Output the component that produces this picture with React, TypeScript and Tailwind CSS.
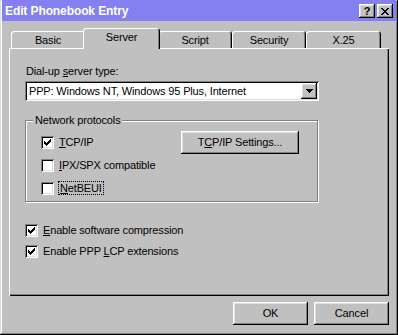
import type { ReactNode } from 'react';

// Win95 style bevels
const raised =
  'shadow-[inset_-1px_-1px_#000,inset_1px_1px_#fff,inset_-2px_-2px_#808080,inset_2px_2px_#dfdfdf]';
const sunken =
  'shadow-[inset_1px_1px_#808080,inset_-1px_-1px_#fff,inset_2px_2px_#000,inset_-2px_-2px_#dfdfdf]';

function CheckMark() {
  // 7x7 pixel tick
  return (
    <svg width="7" height="7" viewBox="0 0 7 7" shapeRendering="crispEdges">
      <path
        d="M6 0h1v3h-1zM5 1h1v3h-1zM4 2h1v3h-1zM0 2h1v3h-1zM1 3h1v3h-1zM2 4h1v3h-1zM3 3h1v3h-1z"
        fill="#000"
      />
    </svg>
  );
}

function Checkbox({ checked, children }: { checked?: boolean; children: ReactNode }) {
  return (
    <div className="flex items-center gap-[5px]">
      <div className={`w-[13px] h-[13px] bg-white flex items-center justify-center ${sunken}`}>
        {checked && <CheckMark />}
      </div>
      <span>{children}</span>
    </div>
  );
}

function Button({ children, w }: { children: ReactNode; w: string }) {
  return (
    <div className={`${w} h-[23px] flex items-center justify-center bg-[#c0c0c0] ${raised}`}>
      {children}
    </div>
  );
}

function Tab({ label, w, active }: { label: string; w: string; active?: boolean }) {
  if (active) {
    return (
      <div
        className={`${w} relative z-10 -mx-[2px] -mb-[1px] h-[21px] pb-[2px] bg-[#c0c0c0] rounded-t-[3px] flex items-center justify-center shadow-[inset_1px_1px_#fff,inset_-1px_0_#000,inset_-2px_0_#808080]`}
      >
        {label}
      </div>
    );
  }
  return (
    <div
      className={`${w} h-[17px] pt-[2px] rounded-t-[3px] flex items-center justify-center shadow-[inset_1px_1px_#fff,inset_-1px_0_#000,inset_-2px_0_#808080]`}
    >
      {label}
    </div>
  );
}

export default function App() {
  return (
    <div className="w-[398px] h-[335px] bg-[#c0c0c0] flex flex-col text-black text-[11px] leading-[13px] tracking-[-0.15px] font-['Liberation_Sans',Arial,sans-serif] shadow-[inset_-1px_-1px_#000,inset_1px_1px_#dfdfdf,inset_-2px_-2px_#808080,inset_2px_2px_#fff]">
      {/* Başlık çubuğu */}
      <div className="mx-[2px] h-[21px] pt-[1px] pl-[3px] pr-[3px] bg-[#8480f2] flex items-center">
        <span className="text-white font-bold text-[12px] tracking-[-0.1px]">Edit Phonebook Entry</span>
        <div className="ml-auto flex gap-[2px]">
          <div className={`w-[16px] h-[14px] bg-[#c0c0c0] flex items-center justify-center font-bold text-[11px] leading-none ${raised}`}>
            ?
          </div>
          <div className={`w-[16px] h-[14px] bg-[#c0c0c0] flex items-center justify-center ${raised}`}>
            <svg width="8" height="7" viewBox="0 0 8 7" shapeRendering="crispEdges">
              <path
                d="M0 0h2v1h-2zM6 0h2v1h-2zM1 1h2v1h-2zM5 1h2v1h-2zM2 2h4v1h-4zM3 3h2v1h-2zM2 4h4v1h-4zM1 5h2v1h-2zM5 5h2v1h-2zM0 6h2v1h-2zM6 6h2v1h-2z"
                fill="#000"
              />
            </svg>
          </div>
        </div>
      </div>

      {/* Sekmeler + panel */}
      <div className="mx-[9px] mt-[7px] flex flex-col">
        <div className="h-[20px] pl-[2px] flex items-end">
          <Tab label="Basic" w="w-[74px]" />
          <Tab label="Server" w="w-[77px]" active />
          <Tab label="Script" w="w-[74px]" />
          <Tab label="Security" w="w-[74px]" />
          <Tab label="X.25" w="w-[75px]" />
        </div>
        <div className="h-[248px] pt-[17px] pl-[16px] flex flex-col shadow-[inset_1px_1px_#fff,inset_-1px_-1px_#000,inset_-2px_-2px_#808080]">
          <div className="ml-[1px]">
            Dial-up <u>s</u>erver type:
          </div>
          <div className={`mt-[3px] w-[294px] h-[20px] bg-white flex items-center pl-[4px] pr-[2px] ${sunken}`}>
            <span className="flex-1">PPP: Windows NT, Windows 95 Plus, Internet</span>
            <div className={`w-[16px] h-[16px] bg-[#c0c0c0] flex items-center justify-center ${raised}`}>
              <svg width="7" height="4" viewBox="0 0 7 4" shapeRendering="crispEdges">
                <path d="M0 0h7v1h-7zM1 1h5v1h-5zM2 2h3v1h-3zM3 3h1v1h-1z" fill="#000" />
              </svg>
            </div>
          </div>

          {/* Network protocols */}
          <div className="relative mt-[19px] w-[293px] h-[82px] pt-[10px] pl-[15px] pr-[18px] border border-[#808080] shadow-[inset_1px_1px_#fff,1px_1px_#fff]">
            <span className="absolute -top-[7px] left-[7px] px-[2px] bg-[#c0c0c0]">Network protocols</span>
            <div className="h-[23px] flex items-center">
              <div className="flex-1">
                <Checkbox checked>
                  <u>T</u>CP/IP
                </Checkbox>
              </div>
              <Button w="w-[118px]">
                <span>
                  T<u>C</u>P/IP Settings...
                </span>
              </Button>
            </div>
            <div className="h-[23px] flex items-center">
              <Checkbox>
                <u>I</u>PX/SPX compatible
              </Checkbox>
            </div>
            <div className="h-[23px] flex items-center">
              <Checkbox>
                <span className="-ml-[1px] px-[1px] border border-dotted border-black">
                  <u>N</u>etBEUI
                </span>
              </Checkbox>
            </div>
          </div>

          <div className="mt-[18px] h-[21px] flex items-center">
            <Checkbox checked>
              <u>E</u>nable software compression
            </Checkbox>
          </div>
          <div className="h-[21px] flex items-center">
            <Checkbox checked>
              Enable PPP <u>L</u>CP extensions
            </Checkbox>
          </div>
        </div>
      </div>

      {/* Alt düğmeler */}
      <div className="mt-[6px] mr-[9px] flex justify-end gap-[6px]">
        <Button w="w-[75px]">OK</Button>
        <Button w="w-[75px]">Cancel</Button>
      </div>
    </div>
  );
}
